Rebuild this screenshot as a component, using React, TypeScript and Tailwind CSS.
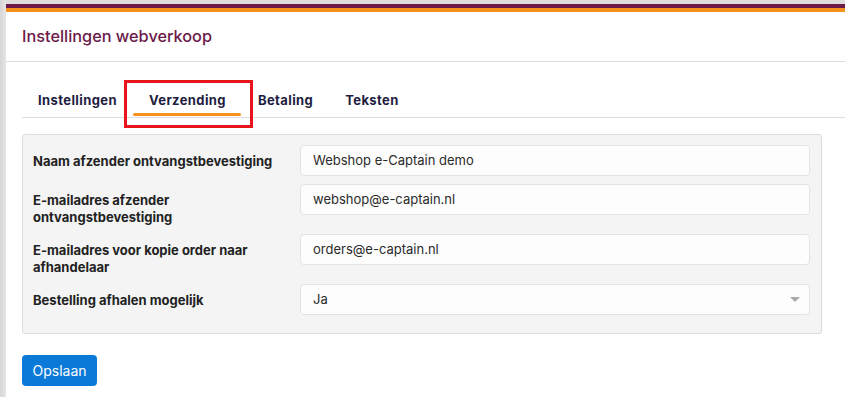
import React from "react";

const rows: { label: string; value: string; select?: boolean }[] = [
  { label: "Naam afzender ontvangstbevestiging", value: "Webshop e-Captain demo" },
  { label: "E-mailadres afzender ontvangstbevestiging", value: "webshop@e-captain.nl" },
  { label: "E-mailadres voor kopie order naar afhandelaar", value: "orders@e-captain.nl" },
  { label: "Bestelling afhalen mogelijk", value: "Ja", select: true },
];

export default function App() {
  return (
    <div
      className="flex h-[397px] w-[845px] overflow-hidden bg-[#dedede]"
      style={{ fontFamily: "Inter, 'Noto Sans', sans-serif" }}
    >
      <div className="w-[6px] shrink-0 bg-gradient-to-r from-[#d6d6d6] to-[#e6e6e6]" />
      <div className="flex min-w-0 flex-1 flex-col pt-[4px]">
        <div className="flex flex-1 flex-col bg-white">
          <div className="h-[4px] bg-[#6d1a48]" />
          <div className="h-[4px] bg-[#f7911d]" />
          <div className="flex h-[50px] items-center border-b border-[#dddddd] pl-[16px]">
            <h1 className="text-[16.3px] font-medium leading-none text-[#6b1a4a]">
              Instellingen webverkoop
            </h1>
          </div>
          <div className="flex flex-col pl-[16px]">
            <div className="relative mt-[19px] flex h-[37px] border-b border-[#dedede]">
              {["Instellingen", "Verzending", "Betaling", "Teksten"].map((t, i) => (
                <div
                  key={t}
                  className="relative flex items-start px-[16px] pt-[13px] text-[13px] font-bold leading-none tracking-[0.4px] text-[#221d3f]"
                >
                  {t}
                  {i === 1 && (
                    <div className="absolute bottom-[1px] left-0 right-[1px] h-[3px] rounded-full bg-[#f7911d]" />
                  )}
                </div>
              ))}
              <div className="pointer-events-none absolute left-[102px] top-[-1px] h-[48px] w-[129px] border-[3px] border-[#e8141c]" />
            </div>
            <div className="mt-[16px] w-[800px] rounded-[3px] border border-[#dcdcdc] bg-[#f4f4f4] pb-[18px] pl-[10px] pr-[11px] pt-[10px]">
              <div className="flex flex-col gap-[8px]">
                {rows.map((r) => (
                  <div key={r.label} className="flex items-start">
                    <div className="w-[267px] shrink-0 pr-[20px] pt-[8px] text-[13px] font-[650] leading-[17px] text-[#222222]">
                      {r.label}
                    </div>
                    <div className="relative flex h-[31px] flex-1 items-center rounded-[4px] border border-[#e3e3e3] bg-[#fdfdfd] px-[12px] text-[13px] text-[#2a2a2a]">
                      {r.value}
                      {r.select && (
                        <svg
                          className="absolute right-[9px] top-[12px]"
                          width="10"
                          height="6"
                          viewBox="0 0 10 6"
                        >
                          <path d="M0 0 L10 0 L5 5 Z" fill="#aaaaaa" />
                        </svg>
                      )}
                    </div>
                  </div>
                ))}
              </div>
            </div>
            <div className="mt-[21px]">
              <button className="flex h-[31px] w-[75px] items-center justify-center rounded-[4px] bg-[#0a79d8] text-[14px] text-white">
                Opslaan
              </button>
            </div>
          </div>
        </div>
      </div>
    </div>
  );
}
